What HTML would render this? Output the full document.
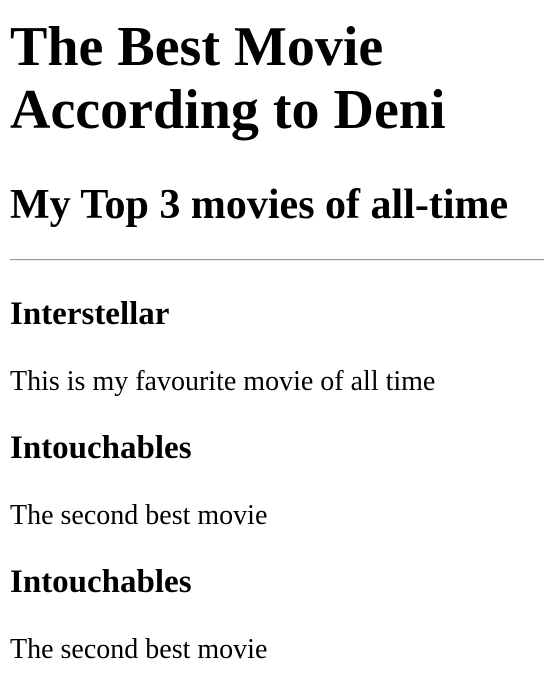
<!DOCTYPE html>
<html><head><meta charset="utf-8"><style>
body{margin:0;width:544px;height:700px;background:#fff;color:#000;font-family:"Liberation Serif",serif;position:relative;overflow:hidden}
div{position:absolute;left:10px;white-space:nowrap}
.h1{font-size:56px;line-height:56px;font-weight:bold}
.h2{font-size:42px;line-height:42px;font-weight:bold}
.h3{font-size:33px;line-height:33px;font-weight:bold}
.p{font-size:28px;line-height:28px}
.hr{top:259px;left:10px;width:534px;height:0;border-top:1px solid #9a9a9a;border-bottom:1px solid #eee}
</style></head><body>
<div class="h1" style="top:19px">The Best Movie</div>
<div class="h1" style="top:82px">According to Deni</div>
<div class="h2" style="top:184px">My Top 3 movies of all-time</div>
<div class="hr"></div>
<div class="h3" style="top:298px">Interstellar</div>
<div class="p" style="top:368px">This is my favourite movie of all time</div>
<div class="h3" style="top:432px">Intouchables</div>
<div class="p" style="top:502px">The second best movie</div>
<div class="h3" style="top:566px">Intouchables</div>
<div class="p" style="top:636px">The second best movie</div>
</body></html>
